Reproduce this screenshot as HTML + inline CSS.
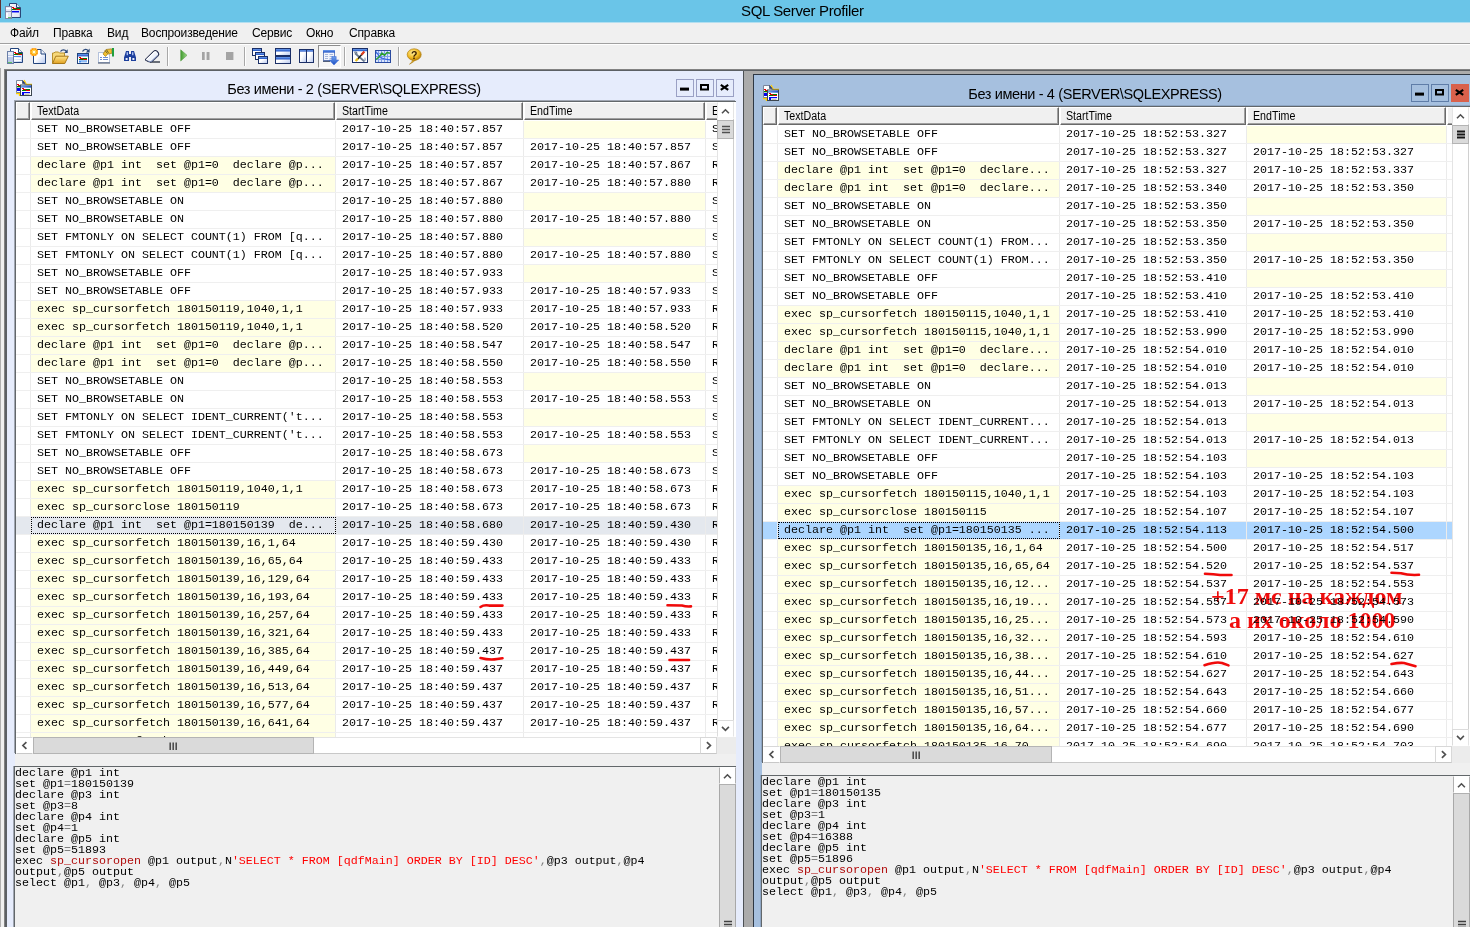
<!DOCTYPE html>
<html lang="ru"><head><meta charset="utf-8"><title>SQL Server Profiler</title>
<style>
*{box-sizing:border-box;margin:0;padding:0}
html,body{width:1470px;height:927px;overflow:hidden}
body{position:relative;background:#f0f0f0;font-family:"Liberation Sans", sans-serif;color:#000}
.abs{position:absolute}
#titlebar{left:0;top:0;width:1470px;height:22px;background:#6ac5e8}
#apptitle{left:741px;top:0;height:22px;line-height:22px;font-size:15px;letter-spacing:-0.36px;white-space:pre}
#menubar{left:0;top:22px;width:1470px;height:21px;background:#f0f0f0;font-size:12px;line-height:23px;letter-spacing:-0.15px}
#menubar span{position:absolute;top:0;white-space:pre}
#menuline{left:0;top:43px;width:1470px;height:1px;background:#a0a0a0}
#menuline2{left:0;top:44px;width:1470px;height:1px;background:#ffffff}
#toolbar{left:0;top:45px;width:1470px;height:24px;background:#f0f0f0}
.tsep{position:absolute;top:47px;width:1px;height:19px;background:#a8a8a8}
.tsep2{position:absolute;top:47px;width:1px;height:19px;background:#ffffff}
#mdi{left:4px;top:69px;width:1470px;height:900px;background:#ababab;border-left:1px solid #828282;border-top:1px solid #828282}
#mdi2{left:5px;top:70px;width:1470px;height:900px;background:#ababab;border-left:2px solid #5c6064;border-top:1px solid #5c6064}
#edge0{left:0;top:68px;width:1px;height:900px;background:#b0b0b0}
#mdil{left:0;top:69px;width:4px;height:900px;background:#f0f0f0}
.win{position:absolute;overflow:hidden}
.wtitle{position:absolute;white-space:pre;font-size:14.5px;letter-spacing:-0.37px;line-height:20px;text-align:center}
.cbtn{position:absolute;width:18px;height:18px;border:1px solid #9aa0c4}
.grid{position:absolute;background:#fff;overflow:hidden}
.hdr{position:absolute;height:18px;background:#f0f0f0;border-top:1px solid #fff;border-left:1px solid #fff;border-right:1px solid #696969;border-bottom:1px solid #696969;font-size:11px;line-height:15px;white-space:pre;overflow:hidden}
.hdr i{position:absolute;left:0;top:0;right:0;bottom:0;border-right:1px solid #a0a0a0;border-bottom:1px solid #a0a0a0}
.hdr b{position:absolute;font-weight:normal;font-style:normal;top:1px;font-size:12px;transform:scaleX(.89);transform-origin:0 0}
.row{position:absolute;left:0;height:18px;border-bottom:1px solid #efefef;font-family:"Liberation Mono", monospace;font-size:11.67px;line-height:17px;white-space:pre}
.c{position:absolute;top:0;height:17px;overflow:hidden;border-right:1px solid #ebebeb;padding-left:6px}
.y{background:#ffffe4}
.sb{position:absolute;background:#fff}
.sbtn{position:absolute;width:17px;height:17px;background:#fff;border:1px solid #dadada}
.thumb{position:absolute;background:#dadada;border:1px solid #b4b4b4}
.pane{position:absolute;background:#f0f0f0;font-family:"Liberation Mono", monospace;font-size:11.67px;line-height:11px;white-space:pre;overflow:hidden}
.pane .l{position:absolute;left:0;height:11px}
.g{color:#808080}.r{color:#ff0000}.dr{color:#b00c0c}
svg{position:absolute;overflow:visible}
.ic{z-index:3}
</style></head>
<body>
<div id="titlebar" class="abs"></div>
<div id="apptitle" class="abs">SQL Server Profiler</div>
<div class="abs" style="left:0;top:22px;width:1470px;height:1px;background:#b4dff0;z-index:2"></div><div class="abs" style="left:0;top:0;width:1px;height:18px;background:#5e3030"></div>
<div id="menubar" class="abs"><span style="left:10px">Файл</span><span style="left:53px">Правка</span><span style="left:107px">Вид</span><span style="left:141px">Воспроизведение</span><span style="left:252px">Сервис</span><span style="left:306px">Окно</span><span style="left:349px">Справка</span></div>
<div id="menuline" class="abs"></div><div id="menuline2" class="abs"></div>
<div id="toolbar" class="abs"></div>
<div class="tsep" style="left:167px"></div><div class="tsep2" style="left:168px"></div><div class="tsep" style="left:244px"></div><div class="tsep2" style="left:245px"></div><div class="tsep" style="left:344px"></div><div class="tsep2" style="left:345px"></div><div class="tsep" style="left:398px"></div><div class="tsep2" style="left:399px"></div>
<svg width="0" height="0" style="left:0;top:0"><defs><linearGradient id="gw" x1="0" y1="0" x2="1" y2="1"><stop offset="0" stop-color="#ffffff"/><stop offset=".45" stop-color="#ffffff"/><stop offset="1" stop-color="#b4c6ee"/></linearGradient><linearGradient id="gb" x1="0" y1="0" x2="0" y2="1"><stop offset="0" stop-color="#6f9fec"/><stop offset="1" stop-color="#1c4fc4"/></linearGradient><linearGradient id="gf" x1="0" y1="0" x2="0" y2="1"><stop offset="0" stop-color="#ffe58a"/><stop offset="1" stop-color="#e0a020"/></linearGradient><linearGradient id="gg" x1="0" y1="0" x2="1" y2="0"><stop offset="0" stop-color="#3f9a2e"/><stop offset="1" stop-color="#9fd98a"/></linearGradient><radialGradient id="gh" cx=".4" cy=".35" r=".7"><stop offset="0" stop-color="#fff0a0"/><stop offset=".6" stop-color="#f0b820"/><stop offset="1" stop-color="#b07808"/></radialGradient><radialGradient id="gs" cx=".5" cy=".5" r=".5"><stop offset="0" stop-color="#fff8c0"/><stop offset=".5" stop-color="#ffb000"/><stop offset="1" stop-color="#ff8800"/></radialGradient></defs></svg><svg class="ic" width="16" height="16" viewBox="0 0 16 16" style="left:7px;top:48px" ><path d="M3.5 0.5 H11.5 L15.5 4.5 V14.5 H3.5 Z" fill="url(#gw)" stroke="#23447c"/><path d="M11.5 0.5 V4.5 H15.5" fill="#e8eefa" stroke="#23447c"/><rect x="7" y="4" width="2" height="1" fill="#e00000"/><rect x="8" y="5" width="3" height="1" fill="#e00000"/><rect x="11" y="5" width="4" height="1" fill="#008000"/><rect x="7" y="6" width="4" height="1" fill="#008000"/><rect x="11" y="6" width="4" height="1" fill="#e00000"/><rect x="7" y="8" width="7" height="1" fill="#4f8ae8"/><rect x="7" y="10" width="7" height="1" fill="#fff"/><rect x="7" y="12" width="7" height="1" fill="#fff"/><rect x="0.5" y="3.5" width="6" height="12" fill="#b9c8e8" stroke="#6a7fa8"/><rect x="1" y="4" width="5" height="3" fill="#e6ecf8"/><rect x="1" y="8" width="5" height="1" fill="#f4f6fc"/><rect x="1" y="14" width="4" height="1" fill="#60c060"/></svg><svg class="ic" width="16" height="16" viewBox="0 0 16 16" style="left:30px;top:48px" ><path d="M3.5 1.5 H11 L15.5 6 V15.5 H3.5 Z" fill="url(#gw)" stroke="#23447c"/><path d="M11 1.5 V6 H15.5" fill="#eef2fb" stroke="#23447c"/><circle cx="4" cy="4" r="4" fill="url(#gs)"/><path d="M4 0v8M0 4h8M1.2 1.2l5.6 5.6M6.8 1.2l-5.6 5.6" stroke="#ffe070" stroke-width=".7"/><circle cx="4" cy="4" r="1.2" fill="#fffbe0"/></svg><svg class="ic" width="17" height="16" viewBox="0 0 17 16" style="left:52px;top:48px" ><path d="M8.5 3.5 C10 1.3 13 1.3 14.5 3.5" fill="none" stroke="#2c4a7c" stroke-width="1.3"/><path d="M15.7 1.2 V5 H12 Z" fill="#2c4a7c"/><path d="M0.5 15.5 V5 H2 L3 4 H6.5 L7.5 5 H12.5 V8" fill="#f6d87a" stroke="#b8902c"/><path d="M0.5 15.5 L3.8 8.2 H16.3 L12.8 15.5 Z" fill="url(#gf)" stroke="#a87818"/></svg><svg class="ic" width="15" height="16" viewBox="0 0 15 16" style="left:76px;top:48px" ><path d="M6.5 3.5 C8 0.8 11 0.8 12.3 3" fill="none" stroke="#2c4a7c" stroke-width="1.3"/><path d="M13.6 0.5 V4.6 H9.8 Z" fill="#2c4a7c"/><rect x="1.5" y="5.5" width="11" height="10" fill="#fff" stroke="#23447c"/><rect x="2" y="6" width="10" height="2.4" fill="url(#gb)"/><rect x="3" y="9" width="2" height="1" fill="#e00000"/><rect x="4" y="10" width="3" height="1" fill="#e00000"/><rect x="7" y="10" width="4" height="1" fill="#008000"/><rect x="3" y="11" width="4" height="1" fill="#008000"/><rect x="7" y="11" width="4" height="1" fill="#e00000"/><rect x="3" y="12.5" width="8" height="2" fill="#3f8cf0"/><rect x="5" y="13.6" width="6" height=".9" fill="#fff"/></svg><svg class="ic" width="17" height="16" viewBox="0 0 17 16" style="left:98px;top:48px" ><rect x="0.5" y="4.5" width="11" height="10" fill="#fff" stroke="#b4c2dc"/><path d="M0 15 H12" stroke="#3c4a64" stroke-width="1"/><path d="M2 9.5h2M5 9.5h5M2 11.5h2M5 11.5h5" stroke="#6f8fd0" stroke-width="1"/><path d="M5 6 L8 1.5 L13.5 0.8 L14 5.2 L9.5 6.2 L7.5 8.5 Z" fill="#f2c030" stroke="#9a7a20" stroke-width=".7"/><path d="M7 2.5l2.5 3M8.5 1.8l2 3" stroke="#4a4a28" stroke-width=".8"/><rect x="14" y="0" width="2" height="8.5" fill="#20a040"/></svg><svg class="ic" width="14" height="12" viewBox="0 0 14 12" style="left:123px;top:50px" ><path d="M3 1 H6 V4 H8 V1 H11 L13 7.5 V11 H8 V7 H6 V11 H1 V7.5 Z" fill="#1d3f9c"/><rect x="2.6" y="8" width="2" height="2" fill="#e8eefc"/><rect x="9.4" y="8" width="2" height="2" fill="#e8eefc"/><rect x="3.6" y="2.2" width="1.4" height="3" fill="#a9bdf0"/><rect x="9" y="2.2" width="1.4" height="3" fill="#a9bdf0"/></svg><svg class="ic" width="17" height="15" viewBox="0 0 17 15" style="left:144px;top:49px" ><path d="M6 13 H16" stroke="#101828" stroke-width="1.2"/><path d="M1.8 10.2 L9.6 2.4 Q11.2 1 13 2.2 L14.4 3.8 Q15.4 5.4 14 6.8 L8 12.6 Q6 13.4 4.2 12.6 L2 11.4 Q1.2 10.8 1.8 10.2 Z" fill="#eef2fb" stroke="#1c2444" stroke-width="1.1"/><path d="M2.4 10.8 L9.8 3.6 Q11.2 2.6 12.4 3.2" fill="none" stroke="#ffffff" stroke-width="1.2"/><path d="M4.6 12.4 Q6.2 12.8 7.6 12.2 L13.6 6.6" fill="none" stroke="#8090b8" stroke-width="1.1"/></svg><svg class="ic" width="8" height="13" viewBox="0 0 8 13" style="left:180px;top:49px" ><path d="M0.7 0.8 L7 6.3 L0.7 12 Z" fill="url(#gg)" stroke="#5aa04a" stroke-width=".6"/></svg><svg class="ic" width="8" height="8" viewBox="0 0 8 8" style="left:202px;top:52px" ><rect x="0" y="0" width="2.7" height="8" fill="#a4a4a4"/><rect x="4.6" y="0" width="2.9" height="8" fill="#a4a4a4"/></svg><svg class="ic" width="8" height="8" viewBox="0 0 8 8" style="left:226px;top:52px" ><rect x="0" y="0" width="7.4" height="8" fill="#a4a4a4"/></svg><svg class="ic" width="17" height="16" viewBox="0 0 17 16" style="left:252px;top:48px" ><rect x="0.5" y="0.5" width="9" height="7" fill="url(#gw)" stroke="#1b2f66"/><rect x="1" y="1" width="8" height="2" fill="url(#gb)"/><rect x="3.5" y="4.5" width="9" height="7" fill="url(#gw)" stroke="#1b2f66"/><rect x="4" y="5" width="8" height="2" fill="url(#gb)"/><rect x="6.5" y="8.5" width="9" height="7" fill="url(#gw)" stroke="#1b2f66"/><rect x="7" y="9" width="8" height="2" fill="url(#gb)"/></svg><svg class="ic" width="17" height="16" viewBox="0 0 17 16" style="left:275px;top:48px" ><rect x="0.5" y="0.5" width="15" height="7" fill="url(#gw)" stroke="#1b2f66"/><rect x="1" y="1" width="14" height="2.5" fill="url(#gb)"/><rect x="0.5" y="8.5" width="15" height="7" fill="url(#gw)" stroke="#1b2f66"/><rect x="1" y="9" width="14" height="2.5" fill="url(#gb)"/></svg><svg class="ic" width="16" height="14" viewBox="0 0 16 14" style="left:299px;top:49px" ><rect x="0.5" y="0.5" width="7" height="13" fill="url(#gw)" stroke="#1b2f66"/><rect x="1" y="1" width="6" height="1.6" fill="url(#gb)"/><rect x="7.5" y="0.5" width="7" height="13" fill="url(#gw)" stroke="#1b2f66"/><rect x="8" y="1" width="6" height="1.6" fill="url(#gb)"/></svg><div class="abs" style="left:318px;top:45px;width:23px;height:23px;background:#f6f6f6;border:1px solid;border-color:#8c8c8c #ffffff #ffffff #8c8c8c"></div><svg class="ic" width="16" height="17" viewBox="0 0 16 17" style="left:323px;top:49px" ><rect x="0.5" y="1.5" width="11" height="10" fill="#f2f5fc" stroke="#7088c0"/><rect x="0" y="1" width="12" height="2.6" fill="url(#gb)"/><path d="M2 5.5h3M6.5 5.5h3.5M2 7.5h3M6.5 7.5h3.5M2 9.5h3M6.5 9.5h3.5" stroke="#a8b8dc" stroke-width="1"/><path d="M0 12.3 H7" stroke="#2a3a5c" stroke-width="1"/><path d="M8.8 7.5 H13.2 V11 H15.8 L11 16 L6.2 11 H8.8 Z" fill="url(#gb)" stroke="#3a6ad8" stroke-width=".5"/></svg><svg class="ic" width="17" height="15" viewBox="0 0 17 15" style="left:352px;top:48px" ><rect x="0.5" y="0.5" width="15" height="14" fill="#fff" stroke="#1b2f66"/><rect x="1" y="1" width="14" height="2.2" fill="url(#gb)"/><path d="M3 5.2 L12.5 13.5" stroke="#6a7a90" stroke-width="1.8"/><path d="M2.2 4.4 q2.2 -1.2 3 1.2" stroke="#6a7a90" stroke-width="1.2" fill="none"/><path d="M12 12 q2 1.6 .8 -2.4" stroke="#8a9ab0" stroke-width="1.1" fill="none"/><path d="M11.8 4.2 L5 11.8" stroke="#202020" stroke-width="1.5"/><path d="M12.4 3.4 L9.4 6.8" stroke="#e04020" stroke-width="2.2"/><path d="M6 10.6 L3.6 13" stroke="#e8c020" stroke-width="2.2"/></svg><svg class="ic" width="17" height="13" viewBox="0 0 17 13" style="left:375px;top:50px" ><rect x="0.5" y="0.5" width="15" height="12" fill="#d8e4fb" stroke="#2a4aa0"/><path d="M1 3.5h14M1 6.5h14M1 9.5h14M3.5 1v11M6.5 1v11M9.5 1v11M12.5 1v11" stroke="#7f9ee8" stroke-width="1"/><path d="M1 1.5 L5 7.5 L9 8.8 L15 10" stroke="#3060e0" stroke-width="1.1" fill="none"/><path d="M1 9.5 L4.5 6.5 L7 3 L9.5 5.5 L12 2.5 L15 3.2" stroke="#28a028" stroke-width="1.3" fill="none"/></svg><svg class="ic" width="17" height="17" viewBox="0 0 17 17" style="left:405px;top:48px" ><path d="M4.5 16.2 Q7.5 14 8 11.6 L11 11.6 Q8 14.6 4.5 16.2 Z" fill="#e8b020" stroke="#a87810" stroke-width=".6"/><ellipse cx="9.2" cy="6.6" rx="7" ry="5.8" fill="url(#gh)" stroke="#b08010" stroke-width=".7"/><text x="9.3" y="10.6" font-family="Liberation Sans, sans-serif" font-weight="bold" font-size="10.5" text-anchor="middle" fill="#3a2000">?</text></svg><svg class="ic" width="16" height="16" viewBox="0 0 16 16" style="left:5px;top:3px" ><defs><linearGradient id="gpg" x1="0" y1="0" x2="1" y2="1"><stop offset="0" stop-color="#fff"/><stop offset="1" stop-color="#b9c6e6"/></linearGradient></defs><path d="M4.5 0.5 H11.5 L15.5 4.5 V14.5 H4.5 Z" fill="url(#gpg)" stroke="#2a4677"/><path d="M11.5 0.5 V4.5 H15.5" fill="#dfe6f5" stroke="#2a4677"/><rect x="7" y="4" width="2" height="1" fill="#e00000"/><rect x="8" y="5" width="3" height="1" fill="#e00000"/><rect x="11" y="5" width="4" height="1" fill="#008000"/><rect x="7" y="6" width="4" height="1" fill="#008000"/><rect x="11" y="6" width="4" height="1" fill="#e00000"/><rect x="7" y="8" width="7" height="1.4" fill="#0000f0"/><rect x="7" y="10.5" width="7" height="1" fill="#fff"/><rect x="7" y="12.5" width="7" height="1" fill="#fff"/><rect x="0.5" y="3.5" width="6" height="12" fill="#e4e6f7" stroke="#7d89a8"/><rect x="1" y="8" width="5" height="1" fill="#8a94b0"/><rect x="1" y="5" width="5" height="1" fill="#fff"/><rect x="1" y="10" width="2" height="5" fill="#fff"/><rect x="3" y="14" width="3" height="1" fill="#60c060"/></svg>
<div id="mdil" class="abs"></div><div id="edge0" class="abs"></div><div id="mdi" class="abs"></div><div id="mdi2" class="abs"></div>
<div class="win" id="wl" style="left:7px;top:71px;width:736px;height:861px;background:#e6ecfc;"><svg class="ic" width="16" height="16" viewBox="0 0 16 16" style="left:9px;top:9px" ><defs><linearGradient id="gtwl" x1="0" y1="0" x2="1" y2="0"><stop offset="0" stop-color="#6f9de6"/><stop offset="1" stop-color="#1f56c8"/></linearGradient></defs><path d="M8 0 L10.5 4.5 H16" stroke="#ffcc00" stroke-width="1.3" fill="none"/><path d="M0 13.5 H3.5 V16" stroke="#ffcc00" stroke-width="1.3" fill="none"/><path d="M0.5 0.5 H6.5 L9 3 V12.5 H0.5 Z" fill="#fff" stroke="#7b879c"/><path d="M6.5 0.5 V3.5 H9 Z" fill="#2a3c66" stroke="#2a3c66" stroke-width=".6"/><rect x="1" y="4" width="2" height="1" fill="#e00000"/><rect x="2" y="5" width="2" height="1" fill="#e00000"/><rect x="1" y="6" width="3" height="1.3" fill="#008000"/><rect x="1" y="8" width="3" height="3" fill="#0000f0"/><rect x="4.5" y="5" width="11" height="10.5" fill="#fff" stroke="#3c4650"/><rect x="5" y="5.5" width="10" height="2.2" fill="url(#gtwl)"/><rect x="6" y="8" width="2" height="1" fill="#e00000"/><rect x="7" y="9" width="3" height="1" fill="#e00000"/><rect x="10" y="9" width="4" height="1" fill="#008000"/><rect x="6" y="10" width="4" height="1" fill="#008000"/><rect x="10" y="10" width="4" height="1" fill="#e00000"/><rect x="6" y="12" width="8" height="1.2" fill="#0000f0"/><rect x="6" y="13" width="2" height="2" fill="#0000f0"/><rect x="8.5" y="14" width="5" height="1" fill="#c8ccb0"/></svg><div class="wtitle" style="left:147px;top:8px;width:400px">Без имени - 2 (SERVER\SQLEXPRESS)</div><div class="cbtn" style="left:669px;top:8px;"><svg width="16" height="16" style="left:0;top:0"><rect x="3" y="7.6" width="9" height="3" fill="#000"/></svg></div><div class="cbtn" style="left:689px;top:8px;"><svg width="16" height="16" style="left:0;top:0"><rect x="4" y="5" width="7" height="4.5" fill="none" stroke="#000" stroke-width="2"/></svg></div><div class="cbtn" style="left:709px;top:8px;"><svg width="16" height="16" style="left:0;top:0"><path d="M3.8 4.8 L11.2 9.9 M11.2 4.8 L3.8 9.9" stroke="#000" stroke-width="2.2" fill="none"/></svg></div><div class="grid" style="left:8px;top:30px;width:721px;height:653px;border-left:1px solid #62676a;border-top:1px solid #62676a;box-shadow:-1px -1px 0 #a0a6b2"><div class="hdr" style="left:0px;top:0;width:14px"><i></i><b style="left:-17px"></b></div><div class="hdr" style="left:15px;top:0;width:304px"><i></i><b style="left:5px">TextData</b></div><div class="hdr" style="left:320px;top:0;width:187px"><i></i><b style="left:5px">StartTime</b></div><div class="hdr" style="left:508px;top:0;width:181px"><i></i><b style="left:5px">EndTime</b></div><div class="hdr" style="left:690px;top:0;width:35px"><i></i><b style="left:5px">EventClass</b></div><div class="row" style="top:19px;width:703px;"><div class="c" style="left:0;width:15px;padding:0"></div><div class="c" style="left:15px;width:305px;">SET NO_BROWSETABLE OFF</div><div class="c" style="left:320px;width:188px">2017-10-25 18:40:57.857</div><div class="c y" style="left:508px;width:182px"></div><div class="c" style="left:690px;width:35px">S</div></div><div class="row" style="top:37px;width:703px;"><div class="c" style="left:0;width:15px;padding:0"></div><div class="c" style="left:15px;width:305px;">SET NO_BROWSETABLE OFF</div><div class="c" style="left:320px;width:188px">2017-10-25 18:40:57.857</div><div class="c" style="left:508px;width:182px">2017-10-25 18:40:57.857</div><div class="c" style="left:690px;width:35px">S</div></div><div class="row" style="top:55px;width:703px;"><div class="c" style="left:0;width:15px;padding:0"></div><div class="c y" style="left:15px;width:305px;">declare @p1 int  set @p1=0  declare @p...</div><div class="c" style="left:320px;width:188px">2017-10-25 18:40:57.857</div><div class="c" style="left:508px;width:182px">2017-10-25 18:40:57.867</div><div class="c" style="left:690px;width:35px">R</div></div><div class="row" style="top:73px;width:703px;"><div class="c" style="left:0;width:15px;padding:0"></div><div class="c y" style="left:15px;width:305px;">declare @p1 int  set @p1=0  declare @p...</div><div class="c" style="left:320px;width:188px">2017-10-25 18:40:57.867</div><div class="c" style="left:508px;width:182px">2017-10-25 18:40:57.880</div><div class="c" style="left:690px;width:35px">R</div></div><div class="row" style="top:91px;width:703px;"><div class="c" style="left:0;width:15px;padding:0"></div><div class="c" style="left:15px;width:305px;">SET NO_BROWSETABLE ON</div><div class="c" style="left:320px;width:188px">2017-10-25 18:40:57.880</div><div class="c y" style="left:508px;width:182px"></div><div class="c" style="left:690px;width:35px">S</div></div><div class="row" style="top:109px;width:703px;"><div class="c" style="left:0;width:15px;padding:0"></div><div class="c" style="left:15px;width:305px;">SET NO_BROWSETABLE ON</div><div class="c" style="left:320px;width:188px">2017-10-25 18:40:57.880</div><div class="c" style="left:508px;width:182px">2017-10-25 18:40:57.880</div><div class="c" style="left:690px;width:35px">S</div></div><div class="row" style="top:127px;width:703px;"><div class="c" style="left:0;width:15px;padding:0"></div><div class="c" style="left:15px;width:305px;">SET FMTONLY ON SELECT COUNT(1) FROM [q...</div><div class="c" style="left:320px;width:188px">2017-10-25 18:40:57.880</div><div class="c y" style="left:508px;width:182px"></div><div class="c" style="left:690px;width:35px">S</div></div><div class="row" style="top:145px;width:703px;"><div class="c" style="left:0;width:15px;padding:0"></div><div class="c" style="left:15px;width:305px;">SET FMTONLY ON SELECT COUNT(1) FROM [q...</div><div class="c" style="left:320px;width:188px">2017-10-25 18:40:57.880</div><div class="c" style="left:508px;width:182px">2017-10-25 18:40:57.880</div><div class="c" style="left:690px;width:35px">S</div></div><div class="row" style="top:163px;width:703px;"><div class="c" style="left:0;width:15px;padding:0"></div><div class="c" style="left:15px;width:305px;">SET NO_BROWSETABLE OFF</div><div class="c" style="left:320px;width:188px">2017-10-25 18:40:57.933</div><div class="c y" style="left:508px;width:182px"></div><div class="c" style="left:690px;width:35px">S</div></div><div class="row" style="top:181px;width:703px;"><div class="c" style="left:0;width:15px;padding:0"></div><div class="c" style="left:15px;width:305px;">SET NO_BROWSETABLE OFF</div><div class="c" style="left:320px;width:188px">2017-10-25 18:40:57.933</div><div class="c" style="left:508px;width:182px">2017-10-25 18:40:57.933</div><div class="c" style="left:690px;width:35px">S</div></div><div class="row" style="top:199px;width:703px;"><div class="c" style="left:0;width:15px;padding:0"></div><div class="c y" style="left:15px;width:305px;">exec sp_cursorfetch 180150119,1040,1,1</div><div class="c" style="left:320px;width:188px">2017-10-25 18:40:57.933</div><div class="c" style="left:508px;width:182px">2017-10-25 18:40:57.933</div><div class="c" style="left:690px;width:35px">R</div></div><div class="row" style="top:217px;width:703px;"><div class="c" style="left:0;width:15px;padding:0"></div><div class="c y" style="left:15px;width:305px;">exec sp_cursorfetch 180150119,1040,1,1</div><div class="c" style="left:320px;width:188px">2017-10-25 18:40:58.520</div><div class="c" style="left:508px;width:182px">2017-10-25 18:40:58.520</div><div class="c" style="left:690px;width:35px">R</div></div><div class="row" style="top:235px;width:703px;"><div class="c" style="left:0;width:15px;padding:0"></div><div class="c y" style="left:15px;width:305px;">declare @p1 int  set @p1=0  declare @p...</div><div class="c" style="left:320px;width:188px">2017-10-25 18:40:58.547</div><div class="c" style="left:508px;width:182px">2017-10-25 18:40:58.547</div><div class="c" style="left:690px;width:35px">R</div></div><div class="row" style="top:253px;width:703px;"><div class="c" style="left:0;width:15px;padding:0"></div><div class="c y" style="left:15px;width:305px;">declare @p1 int  set @p1=0  declare @p...</div><div class="c" style="left:320px;width:188px">2017-10-25 18:40:58.550</div><div class="c" style="left:508px;width:182px">2017-10-25 18:40:58.550</div><div class="c" style="left:690px;width:35px">R</div></div><div class="row" style="top:271px;width:703px;"><div class="c" style="left:0;width:15px;padding:0"></div><div class="c" style="left:15px;width:305px;">SET NO_BROWSETABLE ON</div><div class="c" style="left:320px;width:188px">2017-10-25 18:40:58.553</div><div class="c y" style="left:508px;width:182px"></div><div class="c" style="left:690px;width:35px">S</div></div><div class="row" style="top:289px;width:703px;"><div class="c" style="left:0;width:15px;padding:0"></div><div class="c" style="left:15px;width:305px;">SET NO_BROWSETABLE ON</div><div class="c" style="left:320px;width:188px">2017-10-25 18:40:58.553</div><div class="c" style="left:508px;width:182px">2017-10-25 18:40:58.553</div><div class="c" style="left:690px;width:35px">S</div></div><div class="row" style="top:307px;width:703px;"><div class="c" style="left:0;width:15px;padding:0"></div><div class="c" style="left:15px;width:305px;">SET FMTONLY ON SELECT IDENT_CURRENT('t...</div><div class="c" style="left:320px;width:188px">2017-10-25 18:40:58.553</div><div class="c y" style="left:508px;width:182px"></div><div class="c" style="left:690px;width:35px">S</div></div><div class="row" style="top:325px;width:703px;"><div class="c" style="left:0;width:15px;padding:0"></div><div class="c" style="left:15px;width:305px;">SET FMTONLY ON SELECT IDENT_CURRENT('t...</div><div class="c" style="left:320px;width:188px">2017-10-25 18:40:58.553</div><div class="c" style="left:508px;width:182px">2017-10-25 18:40:58.553</div><div class="c" style="left:690px;width:35px">S</div></div><div class="row" style="top:343px;width:703px;"><div class="c" style="left:0;width:15px;padding:0"></div><div class="c" style="left:15px;width:305px;">SET NO_BROWSETABLE OFF</div><div class="c" style="left:320px;width:188px">2017-10-25 18:40:58.673</div><div class="c y" style="left:508px;width:182px"></div><div class="c" style="left:690px;width:35px">S</div></div><div class="row" style="top:361px;width:703px;"><div class="c" style="left:0;width:15px;padding:0"></div><div class="c" style="left:15px;width:305px;">SET NO_BROWSETABLE OFF</div><div class="c" style="left:320px;width:188px">2017-10-25 18:40:58.673</div><div class="c" style="left:508px;width:182px">2017-10-25 18:40:58.673</div><div class="c" style="left:690px;width:35px">S</div></div><div class="row" style="top:379px;width:703px;"><div class="c" style="left:0;width:15px;padding:0"></div><div class="c y" style="left:15px;width:305px;">exec sp_cursorfetch 180150119,1040,1,1</div><div class="c" style="left:320px;width:188px">2017-10-25 18:40:58.673</div><div class="c" style="left:508px;width:182px">2017-10-25 18:40:58.673</div><div class="c" style="left:690px;width:35px">R</div></div><div class="row" style="top:397px;width:703px;"><div class="c" style="left:0;width:15px;padding:0"></div><div class="c y" style="left:15px;width:305px;">exec sp_cursorclose 180150119</div><div class="c" style="left:320px;width:188px">2017-10-25 18:40:58.673</div><div class="c" style="left:508px;width:182px">2017-10-25 18:40:58.673</div><div class="c" style="left:690px;width:35px">R</div></div><div class="row" style="top:415px;width:703px;background:#e4e8ee;"><div class="c" style="left:0;width:15px;padding:0"></div><div class="c" style="left:15px;width:305px;background:#e4e8ee;outline:1px dotted #000;outline-offset:-1px;">declare @p1 int  set @p1=180150139  de...</div><div class="c" style="left:320px;width:188px">2017-10-25 18:40:58.680</div><div class="c" style="left:508px;width:182px">2017-10-25 18:40:59.430</div><div class="c" style="left:690px;width:35px">R</div></div><div class="row" style="top:433px;width:703px;"><div class="c" style="left:0;width:15px;padding:0"></div><div class="c y" style="left:15px;width:305px;">exec sp_cursorfetch 180150139,16,1,64</div><div class="c" style="left:320px;width:188px">2017-10-25 18:40:59.430</div><div class="c" style="left:508px;width:182px">2017-10-25 18:40:59.430</div><div class="c" style="left:690px;width:35px">R</div></div><div class="row" style="top:451px;width:703px;"><div class="c" style="left:0;width:15px;padding:0"></div><div class="c y" style="left:15px;width:305px;">exec sp_cursorfetch 180150139,16,65,64</div><div class="c" style="left:320px;width:188px">2017-10-25 18:40:59.433</div><div class="c" style="left:508px;width:182px">2017-10-25 18:40:59.433</div><div class="c" style="left:690px;width:35px">R</div></div><div class="row" style="top:469px;width:703px;"><div class="c" style="left:0;width:15px;padding:0"></div><div class="c y" style="left:15px;width:305px;">exec sp_cursorfetch 180150139,16,129,64</div><div class="c" style="left:320px;width:188px">2017-10-25 18:40:59.433</div><div class="c" style="left:508px;width:182px">2017-10-25 18:40:59.433</div><div class="c" style="left:690px;width:35px">R</div></div><div class="row" style="top:487px;width:703px;"><div class="c" style="left:0;width:15px;padding:0"></div><div class="c y" style="left:15px;width:305px;">exec sp_cursorfetch 180150139,16,193,64</div><div class="c" style="left:320px;width:188px">2017-10-25 18:40:59.433</div><div class="c" style="left:508px;width:182px">2017-10-25 18:40:59.433</div><div class="c" style="left:690px;width:35px">R</div></div><div class="row" style="top:505px;width:703px;"><div class="c" style="left:0;width:15px;padding:0"></div><div class="c y" style="left:15px;width:305px;">exec sp_cursorfetch 180150139,16,257,64</div><div class="c" style="left:320px;width:188px">2017-10-25 18:40:59.433</div><div class="c" style="left:508px;width:182px">2017-10-25 18:40:59.433</div><div class="c" style="left:690px;width:35px">R</div></div><div class="row" style="top:523px;width:703px;"><div class="c" style="left:0;width:15px;padding:0"></div><div class="c y" style="left:15px;width:305px;">exec sp_cursorfetch 180150139,16,321,64</div><div class="c" style="left:320px;width:188px">2017-10-25 18:40:59.433</div><div class="c" style="left:508px;width:182px">2017-10-25 18:40:59.433</div><div class="c" style="left:690px;width:35px">R</div></div><div class="row" style="top:541px;width:703px;"><div class="c" style="left:0;width:15px;padding:0"></div><div class="c y" style="left:15px;width:305px;">exec sp_cursorfetch 180150139,16,385,64</div><div class="c" style="left:320px;width:188px">2017-10-25 18:40:59.437</div><div class="c" style="left:508px;width:182px">2017-10-25 18:40:59.437</div><div class="c" style="left:690px;width:35px">R</div></div><div class="row" style="top:559px;width:703px;"><div class="c" style="left:0;width:15px;padding:0"></div><div class="c y" style="left:15px;width:305px;">exec sp_cursorfetch 180150139,16,449,64</div><div class="c" style="left:320px;width:188px">2017-10-25 18:40:59.437</div><div class="c" style="left:508px;width:182px">2017-10-25 18:40:59.437</div><div class="c" style="left:690px;width:35px">R</div></div><div class="row" style="top:577px;width:703px;"><div class="c" style="left:0;width:15px;padding:0"></div><div class="c y" style="left:15px;width:305px;">exec sp_cursorfetch 180150139,16,513,64</div><div class="c" style="left:320px;width:188px">2017-10-25 18:40:59.437</div><div class="c" style="left:508px;width:182px">2017-10-25 18:40:59.437</div><div class="c" style="left:690px;width:35px">R</div></div><div class="row" style="top:595px;width:703px;"><div class="c" style="left:0;width:15px;padding:0"></div><div class="c y" style="left:15px;width:305px;">exec sp_cursorfetch 180150139,16,577,64</div><div class="c" style="left:320px;width:188px">2017-10-25 18:40:59.437</div><div class="c" style="left:508px;width:182px">2017-10-25 18:40:59.437</div><div class="c" style="left:690px;width:35px">R</div></div><div class="row" style="top:613px;width:703px;"><div class="c" style="left:0;width:15px;padding:0"></div><div class="c y" style="left:15px;width:305px;">exec sp_cursorfetch 180150139,16,641,64</div><div class="c" style="left:320px;width:188px">2017-10-25 18:40:59.437</div><div class="c" style="left:508px;width:182px">2017-10-25 18:40:59.437</div><div class="c" style="left:690px;width:35px">R</div></div><div class="row" style="top:631px;width:703px;"><div class="c" style="left:0;width:15px;padding:0"></div><div class="c y" style="left:15px;width:305px;">exec sp_cursorfetch 180150139,16,705,64</div><div class="c" style="left:320px;width:188px">2017-10-25 18:40:59.437</div><div class="c" style="left:508px;width:182px">2017-10-25 18:40:59.437</div><div class="c" style="left:690px;width:35px">R</div></div><div class="sb" style="left:701px;top:0px;width:40px;height:635px"><div class="abs" style="left:0;top:0;width:1px;height:100%;background:#e4e4e4"></div><div class="abs" style="left:16px;top:0;width:1px;height:100%;background:#d0d0d0"></div><div class="sbtn" style="left:0;top:0;border-color:#fff #e4e4e4 #fff #e4e4e4"><svg width="17" height="17" viewBox="0 0 17 17" style="left:-1px;top:-1px"><path d="M5 11.3 L8.45 7.8 L11.9 11.3" fill="none" stroke="#505050" stroke-width="1.6"/></svg></div><div class="thumb" style="left:0;top:18px;width:17px;height:19px"><svg width="16" height="18" style="left:0;top:-1px"><path d="M4 6.5h8M4 9.5h8M4 12.5h8" stroke="#505050" stroke-width="1.5"/></svg></div><div class="sbtn" style="left:0;top:618px;border-color:#dcdcdc #e4e4e4 #fff #dcdcdc"><svg width="17" height="17" viewBox="0 0 17 17" style="left:-1px;top:-1px"><path d="M5 6.9 L8.45 10.4 L11.9 6.9" fill="none" stroke="#505050" stroke-width="1.6"/></svg></div></div><div class="sb" style="left:0px;top:635px;width:701px;height:17px"><div class="abs" style="left:0;top:0;width:100%;height:1px;background:#e4e4e4"></div><div class="abs" style="left:0;top:16px;width:100%;height:1px;background:#c8c8c8"></div><div class="sbtn" style="left:0;top:0;border-color:#d8d8d8 #fff #c8c8c8 #fff"><svg width="17" height="17" viewBox="0 0 17 17" style="left:-1px;top:-1px"><path d="M10.4 5.1 L6.9 8.5 L10.4 11.9" fill="none" stroke="#505050" stroke-width="1.7"/></svg></div><div class="thumb" style="left:17px;top:0;width:281px;height:17px"><svg width="10" height="16" style="left:135px;top:0"><path d="M1.2 4.5v7.5M4.2 4.5v7.5M7.2 4.5v7.5" stroke="#484848" stroke-width="1.5"/></svg></div><div class="sbtn" style="left:684px;top:0;border-color:#d8d8d8 #d8d8d8 #c8c8c8 #d8d8d8"><svg width="17" height="17" viewBox="0 0 17 17" style="left:-1px;top:-1px"><path d="M6.9 5.1 L10.4 8.5 L6.9 11.9" fill="none" stroke="#505050" stroke-width="1.7"/></svg></div></div><div class="abs" style="left:701px;top:635px;width:40px;height:17px;background:#ececec"></div></div><div class="abs" style="left:8px;top:683px;width:721px;height:12px;background:#f0f0f0"></div><div class="pane" style="left:7px;top:695px;width:722px;height:174px;border-left:1px solid #62676a;border-top:1px solid #62676a;box-shadow:-1px 0 0 #a0a6b2"><div class="l" style="top:1px">declare @p1 int</div><div class="l" style="top:12px">set @p1<span class="g">=</span>180150139</div><div class="l" style="top:23px">declare @p3 int</div><div class="l" style="top:34px">set @p3<span class="g">=</span>8</div><div class="l" style="top:45px">declare @p4 int</div><div class="l" style="top:56px">set @p4<span class="g">=</span>1</div><div class="l" style="top:67px">declare @p5 int</div><div class="l" style="top:78px">set @p5<span class="g">=</span>51893</div><div class="l" style="top:89px">exec <span class="dr">sp_cursoropen</span> @p1 output<span class="g">,</span>N<span class="r">'SELECT * FROM [qdfMain] ORDER BY [ID] DESC'</span><span class="g">,</span>@p3 output<span class="g">,</span>@p4</div><div class="l" style="top:100px">output<span class="g">,</span>@p5 output</div><div class="l" style="top:111px">select @p1<span class="g">,</span> @p3<span class="g">,</span> @p4<span class="g">,</span> @p5</div><div class="sb" style="left:704px;top:0;width:30px;height:200px;background:#f0f0f0"><div class="sbtn" style="left:0;top:0;border-color:#fff #b0b0b0 #fff #b0b0b0"><svg width="17" height="17" viewBox="0 0 17 17" style="left:-1px;top:-1px"><path d="M5 11.3 L8.45 7.8 L11.9 11.3" fill="none" stroke="#505050" stroke-width="1.6"/></svg></div><div class="thumb" style="left:0;top:17px;width:17px;height:300px;border-color:#b0b0b0 #a8a8a8"><svg width="16" height="10" style="left:0;top:135px"><path d="M4 1.5h8M4 4.5h8M4 7.5h8" stroke="#404040" stroke-width="1.5"/></svg></div></div></div></div>
<div class="abs" style="left:743px;top:71px;width:1px;height:900px;background:#4c5054"></div>
<div class="win" id="wr" style="left:753px;top:74px;width:720px;height:858px;background:#a6c0df;border:1px solid #2e3844;"><svg class="ic" width="16" height="16" viewBox="0 0 16 16" style="left:9px;top:10px" ><defs><linearGradient id="gtwr" x1="0" y1="0" x2="1" y2="0"><stop offset="0" stop-color="#6f9de6"/><stop offset="1" stop-color="#1f56c8"/></linearGradient></defs><path d="M8 0 L10.5 4.5 H16" stroke="#ffcc00" stroke-width="1.3" fill="none"/><path d="M0 13.5 H3.5 V16" stroke="#ffcc00" stroke-width="1.3" fill="none"/><path d="M0.5 0.5 H6.5 L9 3 V12.5 H0.5 Z" fill="#fff" stroke="#7b879c"/><path d="M6.5 0.5 V3.5 H9 Z" fill="#2a3c66" stroke="#2a3c66" stroke-width=".6"/><rect x="1" y="4" width="2" height="1" fill="#e00000"/><rect x="2" y="5" width="2" height="1" fill="#e00000"/><rect x="1" y="6" width="3" height="1.3" fill="#008000"/><rect x="1" y="8" width="3" height="3" fill="#0000f0"/><rect x="4.5" y="5" width="11" height="10.5" fill="#fff" stroke="#3c4650"/><rect x="5" y="5.5" width="10" height="2.2" fill="url(#gtwr)"/><rect x="6" y="8" width="2" height="1" fill="#e00000"/><rect x="7" y="9" width="3" height="1" fill="#e00000"/><rect x="10" y="9" width="4" height="1" fill="#008000"/><rect x="6" y="10" width="4" height="1" fill="#008000"/><rect x="10" y="10" width="4" height="1" fill="#e00000"/><rect x="6" y="12" width="8" height="1.2" fill="#0000f0"/><rect x="6" y="13" width="2" height="2" fill="#0000f0"/><rect x="8.5" y="14" width="5" height="1" fill="#c8ccb0"/></svg><div class="wtitle" style="left:141px;top:9px;width:400px">Без имени - 4 (SERVER\SQLEXPRESS)</div><div class="cbtn" style="left:657px;top:9px;border-color:#5f7da8;"><svg width="16" height="16" style="left:0;top:0"><rect x="3" y="7.6" width="9" height="3" fill="#000"/></svg></div><div class="cbtn" style="left:677px;top:9px;border-color:#5f7da8;"><svg width="16" height="16" style="left:0;top:0"><rect x="4" y="5" width="7" height="4.5" fill="none" stroke="#000" stroke-width="2"/></svg></div><div class="cbtn" style="left:697px;top:9px;background:#d9614c;border-color:#d9614c;"><svg width="16" height="16" style="left:0;top:0"><path d="M3.8 4.8 L11.2 9.9 M11.2 4.8 L3.8 9.9" stroke="#000" stroke-width="2.2" fill="none"/></svg></div><div class="grid" style="left:8px;top:31px;width:720px;height:657px;border-left:1px solid #62676a;border-top:1px solid #62676a;box-shadow:-1px -1px 0 #8ea6c4"><div class="hdr" style="left:0px;top:0;width:14px"><i></i><b style="left:-764px"></b></div><div class="hdr" style="left:15px;top:0;width:281px"><i></i><b style="left:5px">TextData</b></div><div class="hdr" style="left:297px;top:0;width:186px"><i></i><b style="left:5px">StartTime</b></div><div class="hdr" style="left:484px;top:0;width:199px"><i></i><b style="left:5px">EndTime</b></div><div class="hdr" style="left:684px;top:0;width:24px"><i></i><b style="left:-1448px"></b></div><div class="row" style="top:19px;width:690px;"><div class="c" style="left:0;width:15px;padding:0"></div><div class="c" style="left:15px;width:282px;">SET NO_BROWSETABLE OFF</div><div class="c" style="left:297px;width:187px">2017-10-25 18:52:53.327</div><div class="c y" style="left:484px;width:200px"></div><div class="c" style="left:684px;width:5px"></div></div><div class="row" style="top:37px;width:690px;"><div class="c" style="left:0;width:15px;padding:0"></div><div class="c" style="left:15px;width:282px;">SET NO_BROWSETABLE OFF</div><div class="c" style="left:297px;width:187px">2017-10-25 18:52:53.327</div><div class="c" style="left:484px;width:200px">2017-10-25 18:52:53.327</div><div class="c" style="left:684px;width:5px"></div></div><div class="row" style="top:55px;width:690px;"><div class="c" style="left:0;width:15px;padding:0"></div><div class="c y" style="left:15px;width:282px;">declare @p1 int  set @p1=0  declare...</div><div class="c" style="left:297px;width:187px">2017-10-25 18:52:53.327</div><div class="c" style="left:484px;width:200px">2017-10-25 18:52:53.337</div><div class="c" style="left:684px;width:5px"></div></div><div class="row" style="top:73px;width:690px;"><div class="c" style="left:0;width:15px;padding:0"></div><div class="c y" style="left:15px;width:282px;">declare @p1 int  set @p1=0  declare...</div><div class="c" style="left:297px;width:187px">2017-10-25 18:52:53.340</div><div class="c" style="left:484px;width:200px">2017-10-25 18:52:53.350</div><div class="c" style="left:684px;width:5px"></div></div><div class="row" style="top:91px;width:690px;"><div class="c" style="left:0;width:15px;padding:0"></div><div class="c" style="left:15px;width:282px;">SET NO_BROWSETABLE ON</div><div class="c" style="left:297px;width:187px">2017-10-25 18:52:53.350</div><div class="c y" style="left:484px;width:200px"></div><div class="c" style="left:684px;width:5px"></div></div><div class="row" style="top:109px;width:690px;"><div class="c" style="left:0;width:15px;padding:0"></div><div class="c" style="left:15px;width:282px;">SET NO_BROWSETABLE ON</div><div class="c" style="left:297px;width:187px">2017-10-25 18:52:53.350</div><div class="c" style="left:484px;width:200px">2017-10-25 18:52:53.350</div><div class="c" style="left:684px;width:5px"></div></div><div class="row" style="top:127px;width:690px;"><div class="c" style="left:0;width:15px;padding:0"></div><div class="c" style="left:15px;width:282px;">SET FMTONLY ON SELECT COUNT(1) FROM...</div><div class="c" style="left:297px;width:187px">2017-10-25 18:52:53.350</div><div class="c y" style="left:484px;width:200px"></div><div class="c" style="left:684px;width:5px"></div></div><div class="row" style="top:145px;width:690px;"><div class="c" style="left:0;width:15px;padding:0"></div><div class="c" style="left:15px;width:282px;">SET FMTONLY ON SELECT COUNT(1) FROM...</div><div class="c" style="left:297px;width:187px">2017-10-25 18:52:53.350</div><div class="c" style="left:484px;width:200px">2017-10-25 18:52:53.350</div><div class="c" style="left:684px;width:5px"></div></div><div class="row" style="top:163px;width:690px;"><div class="c" style="left:0;width:15px;padding:0"></div><div class="c" style="left:15px;width:282px;">SET NO_BROWSETABLE OFF</div><div class="c" style="left:297px;width:187px">2017-10-25 18:52:53.410</div><div class="c y" style="left:484px;width:200px"></div><div class="c" style="left:684px;width:5px"></div></div><div class="row" style="top:181px;width:690px;"><div class="c" style="left:0;width:15px;padding:0"></div><div class="c" style="left:15px;width:282px;">SET NO_BROWSETABLE OFF</div><div class="c" style="left:297px;width:187px">2017-10-25 18:52:53.410</div><div class="c" style="left:484px;width:200px">2017-10-25 18:52:53.410</div><div class="c" style="left:684px;width:5px"></div></div><div class="row" style="top:199px;width:690px;"><div class="c" style="left:0;width:15px;padding:0"></div><div class="c y" style="left:15px;width:282px;">exec sp_cursorfetch 180150115,1040,1,1</div><div class="c" style="left:297px;width:187px">2017-10-25 18:52:53.410</div><div class="c" style="left:484px;width:200px">2017-10-25 18:52:53.410</div><div class="c" style="left:684px;width:5px"></div></div><div class="row" style="top:217px;width:690px;"><div class="c" style="left:0;width:15px;padding:0"></div><div class="c y" style="left:15px;width:282px;">exec sp_cursorfetch 180150115,1040,1,1</div><div class="c" style="left:297px;width:187px">2017-10-25 18:52:53.990</div><div class="c" style="left:484px;width:200px">2017-10-25 18:52:53.990</div><div class="c" style="left:684px;width:5px"></div></div><div class="row" style="top:235px;width:690px;"><div class="c" style="left:0;width:15px;padding:0"></div><div class="c y" style="left:15px;width:282px;">declare @p1 int  set @p1=0  declare...</div><div class="c" style="left:297px;width:187px">2017-10-25 18:52:54.010</div><div class="c" style="left:484px;width:200px">2017-10-25 18:52:54.010</div><div class="c" style="left:684px;width:5px"></div></div><div class="row" style="top:253px;width:690px;"><div class="c" style="left:0;width:15px;padding:0"></div><div class="c y" style="left:15px;width:282px;">declare @p1 int  set @p1=0  declare...</div><div class="c" style="left:297px;width:187px">2017-10-25 18:52:54.010</div><div class="c" style="left:484px;width:200px">2017-10-25 18:52:54.010</div><div class="c" style="left:684px;width:5px"></div></div><div class="row" style="top:271px;width:690px;"><div class="c" style="left:0;width:15px;padding:0"></div><div class="c" style="left:15px;width:282px;">SET NO_BROWSETABLE ON</div><div class="c" style="left:297px;width:187px">2017-10-25 18:52:54.013</div><div class="c y" style="left:484px;width:200px"></div><div class="c" style="left:684px;width:5px"></div></div><div class="row" style="top:289px;width:690px;"><div class="c" style="left:0;width:15px;padding:0"></div><div class="c" style="left:15px;width:282px;">SET NO_BROWSETABLE ON</div><div class="c" style="left:297px;width:187px">2017-10-25 18:52:54.013</div><div class="c" style="left:484px;width:200px">2017-10-25 18:52:54.013</div><div class="c" style="left:684px;width:5px"></div></div><div class="row" style="top:307px;width:690px;"><div class="c" style="left:0;width:15px;padding:0"></div><div class="c" style="left:15px;width:282px;">SET FMTONLY ON SELECT IDENT_CURRENT...</div><div class="c" style="left:297px;width:187px">2017-10-25 18:52:54.013</div><div class="c y" style="left:484px;width:200px"></div><div class="c" style="left:684px;width:5px"></div></div><div class="row" style="top:325px;width:690px;"><div class="c" style="left:0;width:15px;padding:0"></div><div class="c" style="left:15px;width:282px;">SET FMTONLY ON SELECT IDENT_CURRENT...</div><div class="c" style="left:297px;width:187px">2017-10-25 18:52:54.013</div><div class="c" style="left:484px;width:200px">2017-10-25 18:52:54.013</div><div class="c" style="left:684px;width:5px"></div></div><div class="row" style="top:343px;width:690px;"><div class="c" style="left:0;width:15px;padding:0"></div><div class="c" style="left:15px;width:282px;">SET NO_BROWSETABLE OFF</div><div class="c" style="left:297px;width:187px">2017-10-25 18:52:54.103</div><div class="c y" style="left:484px;width:200px"></div><div class="c" style="left:684px;width:5px"></div></div><div class="row" style="top:361px;width:690px;"><div class="c" style="left:0;width:15px;padding:0"></div><div class="c" style="left:15px;width:282px;">SET NO_BROWSETABLE OFF</div><div class="c" style="left:297px;width:187px">2017-10-25 18:52:54.103</div><div class="c" style="left:484px;width:200px">2017-10-25 18:52:54.103</div><div class="c" style="left:684px;width:5px"></div></div><div class="row" style="top:379px;width:690px;"><div class="c" style="left:0;width:15px;padding:0"></div><div class="c y" style="left:15px;width:282px;">exec sp_cursorfetch 180150115,1040,1,1</div><div class="c" style="left:297px;width:187px">2017-10-25 18:52:54.103</div><div class="c" style="left:484px;width:200px">2017-10-25 18:52:54.103</div><div class="c" style="left:684px;width:5px"></div></div><div class="row" style="top:397px;width:690px;"><div class="c" style="left:0;width:15px;padding:0"></div><div class="c y" style="left:15px;width:282px;">exec sp_cursorclose 180150115</div><div class="c" style="left:297px;width:187px">2017-10-25 18:52:54.107</div><div class="c" style="left:484px;width:200px">2017-10-25 18:52:54.107</div><div class="c" style="left:684px;width:5px"></div></div><div class="row" style="top:415px;width:690px;background:#add6ff;"><div class="c" style="left:0;width:15px;padding:0"></div><div class="c" style="left:15px;width:282px;background:#add6ff;outline:1px dotted #000;outline-offset:-1px;">declare @p1 int  set @p1=180150135 ...</div><div class="c" style="left:297px;width:187px">2017-10-25 18:52:54.113</div><div class="c" style="left:484px;width:200px">2017-10-25 18:52:54.500</div><div class="c" style="left:684px;width:5px"></div></div><div class="row" style="top:433px;width:690px;"><div class="c" style="left:0;width:15px;padding:0"></div><div class="c y" style="left:15px;width:282px;">exec sp_cursorfetch 180150135,16,1,64</div><div class="c" style="left:297px;width:187px">2017-10-25 18:52:54.500</div><div class="c" style="left:484px;width:200px">2017-10-25 18:52:54.517</div><div class="c" style="left:684px;width:5px"></div></div><div class="row" style="top:451px;width:690px;"><div class="c" style="left:0;width:15px;padding:0"></div><div class="c y" style="left:15px;width:282px;">exec sp_cursorfetch 180150135,16,65,64</div><div class="c" style="left:297px;width:187px">2017-10-25 18:52:54.520</div><div class="c" style="left:484px;width:200px">2017-10-25 18:52:54.537</div><div class="c" style="left:684px;width:5px"></div></div><div class="row" style="top:469px;width:690px;"><div class="c" style="left:0;width:15px;padding:0"></div><div class="c y" style="left:15px;width:282px;">exec sp_cursorfetch 180150135,16,12...</div><div class="c" style="left:297px;width:187px">2017-10-25 18:52:54.537</div><div class="c" style="left:484px;width:200px">2017-10-25 18:52:54.553</div><div class="c" style="left:684px;width:5px"></div></div><div class="row" style="top:487px;width:690px;"><div class="c" style="left:0;width:15px;padding:0"></div><div class="c y" style="left:15px;width:282px;">exec sp_cursorfetch 180150135,16,19...</div><div class="c" style="left:297px;width:187px">2017-10-25 18:52:54.557</div><div class="c" style="left:484px;width:200px">2017-10-25 18:52:54.573</div><div class="c" style="left:684px;width:5px"></div></div><div class="row" style="top:505px;width:690px;"><div class="c" style="left:0;width:15px;padding:0"></div><div class="c y" style="left:15px;width:282px;">exec sp_cursorfetch 180150135,16,25...</div><div class="c" style="left:297px;width:187px">2017-10-25 18:52:54.573</div><div class="c" style="left:484px;width:200px">2017-10-25 18:52:54.590</div><div class="c" style="left:684px;width:5px"></div></div><div class="row" style="top:523px;width:690px;"><div class="c" style="left:0;width:15px;padding:0"></div><div class="c y" style="left:15px;width:282px;">exec sp_cursorfetch 180150135,16,32...</div><div class="c" style="left:297px;width:187px">2017-10-25 18:52:54.593</div><div class="c" style="left:484px;width:200px">2017-10-25 18:52:54.610</div><div class="c" style="left:684px;width:5px"></div></div><div class="row" style="top:541px;width:690px;"><div class="c" style="left:0;width:15px;padding:0"></div><div class="c y" style="left:15px;width:282px;">exec sp_cursorfetch 180150135,16,38...</div><div class="c" style="left:297px;width:187px">2017-10-25 18:52:54.610</div><div class="c" style="left:484px;width:200px">2017-10-25 18:52:54.627</div><div class="c" style="left:684px;width:5px"></div></div><div class="row" style="top:559px;width:690px;"><div class="c" style="left:0;width:15px;padding:0"></div><div class="c y" style="left:15px;width:282px;">exec sp_cursorfetch 180150135,16,44...</div><div class="c" style="left:297px;width:187px">2017-10-25 18:52:54.627</div><div class="c" style="left:484px;width:200px">2017-10-25 18:52:54.643</div><div class="c" style="left:684px;width:5px"></div></div><div class="row" style="top:577px;width:690px;"><div class="c" style="left:0;width:15px;padding:0"></div><div class="c y" style="left:15px;width:282px;">exec sp_cursorfetch 180150135,16,51...</div><div class="c" style="left:297px;width:187px">2017-10-25 18:52:54.643</div><div class="c" style="left:484px;width:200px">2017-10-25 18:52:54.660</div><div class="c" style="left:684px;width:5px"></div></div><div class="row" style="top:595px;width:690px;"><div class="c" style="left:0;width:15px;padding:0"></div><div class="c y" style="left:15px;width:282px;">exec sp_cursorfetch 180150135,16,57...</div><div class="c" style="left:297px;width:187px">2017-10-25 18:52:54.660</div><div class="c" style="left:484px;width:200px">2017-10-25 18:52:54.677</div><div class="c" style="left:684px;width:5px"></div></div><div class="row" style="top:613px;width:690px;"><div class="c" style="left:0;width:15px;padding:0"></div><div class="c y" style="left:15px;width:282px;">exec sp_cursorfetch 180150135,16,64...</div><div class="c" style="left:297px;width:187px">2017-10-25 18:52:54.677</div><div class="c" style="left:484px;width:200px">2017-10-25 18:52:54.690</div><div class="c" style="left:684px;width:5px"></div></div><div class="row" style="top:631px;width:690px;"><div class="c" style="left:0;width:15px;padding:0"></div><div class="c y" style="left:15px;width:282px;">exec sp_cursorfetch 180150135,16,70...</div><div class="c" style="left:297px;width:187px">2017-10-25 18:52:54.690</div><div class="c" style="left:484px;width:200px">2017-10-25 18:52:54.703</div><div class="c" style="left:684px;width:5px"></div></div><div class="sb" style="left:689px;top:0px;width:40px;height:639px"><div class="abs" style="left:0;top:0;width:1px;height:100%;background:#e4e4e4"></div><div class="abs" style="left:16px;top:0;width:1px;height:100%;background:#d0d0d0"></div><div class="sbtn" style="left:0;top:0;border-color:#fff #e4e4e4 #fff #e4e4e4"><svg width="17" height="17" viewBox="0 0 17 17" style="left:-1px;top:-1px"><path d="M5 11.3 L8.45 7.8 L11.9 11.3" fill="none" stroke="#505050" stroke-width="1.6"/></svg></div><div class="thumb" style="left:0;top:18px;width:17px;height:19px"><svg width="16" height="18" style="left:0;top:-1px"><path d="M4 6.5h8M4 9.5h8M4 12.5h8" stroke="#161616" stroke-width="1.9"/></svg></div><div class="sbtn" style="left:0;top:622px;border-color:#dcdcdc #e4e4e4 #fff #dcdcdc"><svg width="17" height="17" viewBox="0 0 17 17" style="left:-1px;top:-1px"><path d="M5 6.9 L8.45 10.4 L11.9 6.9" fill="none" stroke="#505050" stroke-width="1.6"/></svg></div></div><div class="sb" style="left:0px;top:639px;width:689px;height:17px"><div class="abs" style="left:0;top:0;width:100%;height:1px;background:#e4e4e4"></div><div class="abs" style="left:0;top:16px;width:100%;height:1px;background:#c8c8c8"></div><div class="sbtn" style="left:0;top:0;border-color:#d8d8d8 #fff #c8c8c8 #fff"><svg width="17" height="17" viewBox="0 0 17 17" style="left:-1px;top:-1px"><path d="M10.4 5.1 L6.9 8.5 L10.4 11.9" fill="none" stroke="#505050" stroke-width="1.7"/></svg></div><div class="thumb" style="left:17px;top:0;width:272px;height:17px"><svg width="10" height="16" style="left:131px;top:0"><path d="M1.2 4.5v7.5M4.2 4.5v7.5M7.2 4.5v7.5" stroke="#484848" stroke-width="1.5"/></svg></div><div class="sbtn" style="left:672px;top:0;border-color:#d8d8d8 #d8d8d8 #c8c8c8 #d8d8d8"><svg width="17" height="17" viewBox="0 0 17 17" style="left:-1px;top:-1px"><path d="M6.9 5.1 L10.4 8.5 L6.9 11.9" fill="none" stroke="#505050" stroke-width="1.7"/></svg></div></div><div class="abs" style="left:689px;top:639px;width:40px;height:17px;background:#ececec"></div></div><div class="abs" style="left:8px;top:688px;width:720px;height:12px;background:#f0f0f0"></div><div class="pane" style="left:7px;top:700px;width:709px;height:165px;border-left:1px solid #62676a;border-top:1px solid #62676a;box-shadow:-1px 0 0 #8ea6c4"><div class="l" style="top:1px">declare @p1 int</div><div class="l" style="top:12px">set @p1<span class="g">=</span>180150135</div><div class="l" style="top:23px">declare @p3 int</div><div class="l" style="top:34px">set @p3<span class="g">=</span>1</div><div class="l" style="top:45px">declare @p4 int</div><div class="l" style="top:56px">set @p4<span class="g">=</span>16388</div><div class="l" style="top:67px">declare @p5 int</div><div class="l" style="top:78px">set @p5<span class="g">=</span>51896</div><div class="l" style="top:89px">exec <span class="dr">sp_cursoropen</span> @p1 output<span class="g">,</span>N<span class="r">'SELECT * FROM [qdfMain] ORDER BY [ID] DESC'</span><span class="g">,</span>@p3 output<span class="g">,</span>@p4</div><div class="l" style="top:100px">output<span class="g">,</span>@p5 output</div><div class="l" style="top:111px">select @p1<span class="g">,</span> @p3<span class="g">,</span> @p4<span class="g">,</span> @p5</div><div class="sb" style="left:691px;top:0;width:30px;height:200px;background:#f0f0f0"><div class="sbtn" style="left:0;top:0;border-color:#fff #b0b0b0 #fff #b0b0b0"><svg width="17" height="17" viewBox="0 0 17 17" style="left:-1px;top:-1px"><path d="M5 11.3 L8.45 7.8 L11.9 11.3" fill="none" stroke="#505050" stroke-width="1.6"/></svg></div><div class="thumb" style="left:0;top:17px;width:17px;height:300px;border-color:#b0b0b0 #a8a8a8"><svg width="16" height="10" style="left:0;top:126px"><path d="M4 1.5h8M4 4.5h8M4 7.5h8" stroke="#404040" stroke-width="1.5"/></svg></div></div></div></div>
<div class="abs" style="left:1211px;top:584px;font-family:'Liberation Serif', serif;font-weight:bold;font-size:24px;line-height:24px;color:#f00c0c;white-space:pre;mix-blend-mode:multiply;z-index:5" id="an1">+17 мс на каждом</div>
<div class="abs" style="left:1229px;top:608px;font-family:'Liberation Serif', serif;font-weight:bold;font-size:24px;line-height:24px;color:#f00c0c;white-space:pre;mix-blend-mode:multiply;z-index:5" id="an2">а их около 1000</div>
<svg width="1470" height="927" viewBox="0 0 1470 927" style="left:0;top:0;z-index:6;pointer-events:none"><g fill="none" stroke="#f00a0a" stroke-width="2.6" stroke-linecap="round" stroke-linejoin="round"><path d="M480.5 607 Q484 604.6 489 605.6 L502.5 605.6"/><path d="M667.5 605.3 L682 605.5 Q686 606.8 691 606.4"/><path d="M480.5 658 Q490 660.4 497 659 L502.5 658.2"/><path d="M669.5 660 L689 660"/><path d="M1205 573.8 Q1214 574 1220 575 L1231.5 575"/><path d="M1391.5 572.8 L1401 573.2 Q1408 575.4 1419 574.8"/><path d="M1204.5 665.2 Q1216 661.4 1222 663 L1228.5 665.4"/><path d="M1391.5 664 Q1399 662.6 1404 663 L1415.5 666.2"/></g></svg>
</body></html>
